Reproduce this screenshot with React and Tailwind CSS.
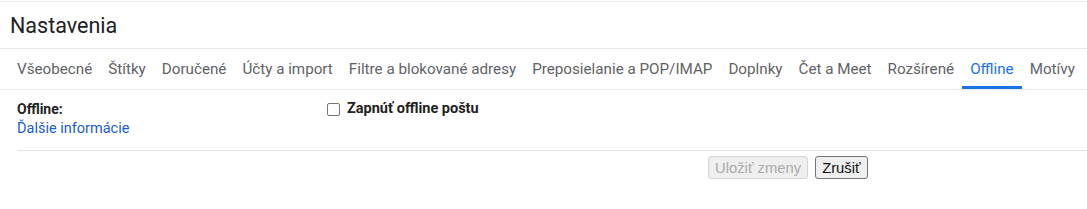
import React from "react"

const tabs = [
  "Všeobecné",
  "Štítky",
  "Doručené",
  "Účty a import",
  "Filtre a blokované adresy",
  "Preposielanie a POP/IMAP",
  "Doplnky",
  "Čet a Meet",
  "Rozšírené",
  "Offline",
  "Motívy"
];

const Tab = ({ label, active }) => (
  <div className={ `
      h-[40px] px-2 pt-[3px] flex items-center whitespace-nowrap text-[15.2px] border-b-[3px]
      ${ active ? "text-[#1a73e8] border-[#1a73e8]" : "text-[#5f6368] border-transparent" }
    ` }
  >
    { label }
  </div>
)

const App = () => {
  return (
    <div className="w-[1087px] h-[209px] overflow-hidden bg-white font-['Roboto',sans-serif]">
      <div className="h-[2px] border-b border-[#e8eaed]"/>
      <div className="h-[47px] pl-[10px] flex items-center border-b border-[#e8eaed]">
        <span className="text-[21.5px] text-[#202124] leading-none pt-[2px]">Nastavenia</span>
      </div>
      <div className="pl-[9px] flex border-b border-[#e8eaed] h-[41px] overflow-hidden">
        { tabs.map(t => <Tab key={ t } label={ t } active={ t === "Offline" }/>) }
      </div>
      <div className="ml-[17px] flex pt-[11px] pb-[10px] border-b border-[#e2e2e2]">
        <div className="w-[310px] flex flex-col">
          <span className="text-[14px] font-bold text-[#222] leading-[16px]">Offline:</span>
          <span className="text-[14.5px] text-[#1a5ccf] leading-[22px] mt-[1px]">Ďalšie informácie</span>
        </div>
        <label className="flex items-start gap-[7px]">
          <span className="mt-[2px] w-[13px] h-[13px] border border-[#767676] rounded-[2px] bg-white"/>
          <span className="text-[14.5px] font-bold text-[#222] leading-[16px]">Zapnúť offline poštu</span>
        </label>
      </div>
      <div className="pl-[708px] pt-[5px] flex gap-[7px] font-['Liberation_Sans',sans-serif] text-[14.8px]">
        <button disabled className="h-[23px] px-[6px] border border-[#d6d6d6] bg-[#efefef] text-[#aaaaaa] rounded-[3px]">
          Uložiť zmeny
        </button>
        <button className="h-[23px] px-[6px] border border-[#767676] bg-[#efefef] text-[#111] rounded-[3px]">
          Zrušiť
        </button>
      </div>
    </div>
  )
}

export default App
